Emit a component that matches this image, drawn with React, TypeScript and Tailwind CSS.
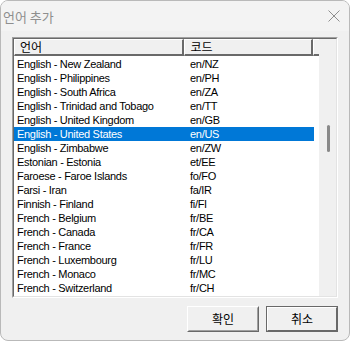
import React from 'react';

type Lang = { name: string; code: string };

const langs: Lang[] = [
  { name: 'English - New Zealand', code: 'en/NZ' },
  { name: 'English - Philippines', code: 'en/PH' },
  { name: 'English - South Africa', code: 'en/ZA' },
  { name: 'English - Trinidad and Tobago', code: 'en/TT' },
  { name: 'English - United Kingdom', code: 'en/GB' },
  { name: 'English - United States', code: 'en/US' },
  { name: 'English - Zimbabwe', code: 'en/ZW' },
  { name: 'Estonian - Estonia', code: 'et/EE' },
  { name: 'Faroese - Faroe Islands', code: 'fo/FO' },
  { name: 'Farsi - Iran', code: 'fa/IR' },
  { name: 'Finnish - Finland', code: 'fi/FI' },
  { name: 'French - Belgium', code: 'fr/BE' },
  { name: 'French - Canada', code: 'fr/CA' },
  { name: 'French - France', code: 'fr/FR' },
  { name: 'French - Luxembourg', code: 'fr/LU' },
  { name: 'French - Monaco', code: 'fr/MC' },
  { name: 'French - Switzerland', code: 'fr/CH' },
];

const selected = 'en/US';

const ko = { fontFamily: '"Noto Sans CJK KR", "Liberation Sans", sans-serif' };
const latin = { fontFamily: '"Liberation Sans", Arial, sans-serif' };

const App: React.FC = () => {
  return (
    <div className="w-[350px] h-[341px] bg-[#f0f0f0] border border-[#b9b9b9] rounded-[8px] overflow-hidden flex flex-col" style={latin}>
      {/* title bar */}
      <div className="h-[30px] flex items-center justify-between pl-[2px] pr-[8px] bg-[#f3f3f3]">
        <span className="text-[13px] text-[#8e8e8e] leading-none" style={ko}>
          언어 추가
        </span>
        <svg width="12" height="12" viewBox="0 0 12 12" className="mr-[1px]">
          <path d="M0.5 0.5 L11.5 11.5 M11.5 0.5 L0.5 11.5" stroke="#8e8e8e" strokeWidth="1" />
        </svg>
      </div>

      <div className="flex-1 flex flex-col px-[11px] pt-[6px]">
        {/* list box */}
        <div className="h-[261px] border-t border-l border-[#a0a0a0] border-r-white border-b-white border-r border-b">
          <div className="h-full border-t border-l border-[#696969] border-r-[#e3e3e3] border-b-[#e3e3e3] border-r border-b flex">
            <div className="flex-1 bg-white flex flex-col overflow-hidden">
              <div className="h-[17px] flex shrink-0 text-[12px] text-black" style={ko}>
                <div className="w-[171px] bg-[#f0f0f0] border-t border-l border-white border-b-2 border-r-2 border-b-[#696969] border-r-[#696969] pl-[5px] leading-[14px]">
                  언어
                </div>
                <div className="w-[129px] bg-[#f0f0f0] border-t border-l border-white border-b-2 border-r-2 border-b-[#696969] border-r-[#696969] pl-[5px] leading-[14px]">
                  코드
                </div>
                <div className="w-[6px] bg-[#f0f0f0] border-t border-l border-white border-b-2 border-b-[#696969]" />
              </div>
              <div className="flex flex-col pt-[1px]">
                {langs.map((l) => {
                  const on = l.code === selected;
                  return (
                    <div
                      key={l.code}
                      className={`h-[14px] w-[300px] flex items-center text-[11px] tracking-[-0.3px] leading-none ${on ? 'bg-[#0078d7] text-white' : 'text-black'}`}
                    >
                      <span className="w-[174px] pl-[3px] whitespace-nowrap">{l.name}</span>
                      <span className="pl-[2px]">{l.code}</span>
                    </div>
                  );
                })}
              </div>
            </div>
            {/* scrollbar */}
            <div className="w-[17px] bg-[#f0f0f0] flex flex-col items-center pt-[86px]">
              <div className="w-[3px] h-[27px] rounded-full bg-[#8a8a8a] ml-[1px]" />
            </div>
          </div>
        </div>

        {/* buttons */}
        <div className="flex justify-end gap-[7px] mt-[8px]">
          <button className="w-[72px] h-[26px] border border-t-white border-l-white border-r-[#696969] border-b-[#696969] bg-[#f0f0f0]">
            <div className="h-full border border-t-[#f0f0f0] border-l-[#f0f0f0] border-r-[#a0a0a0] border-b-[#a0a0a0] flex items-center justify-center text-[12px] text-black" style={ko}>
              확인
            </div>
          </button>
          <button className="w-[72px] h-[26px] border border-[#696969] bg-[#f0f0f0]">
            <div className="h-full border border-t-white border-l-white border-r-[#696969] border-b-[#696969] flex items-center justify-center text-[12px] text-black" style={ko}>
              취소
            </div>
          </button>
        </div>
      </div>
    </div>
  );
};

export default App;
